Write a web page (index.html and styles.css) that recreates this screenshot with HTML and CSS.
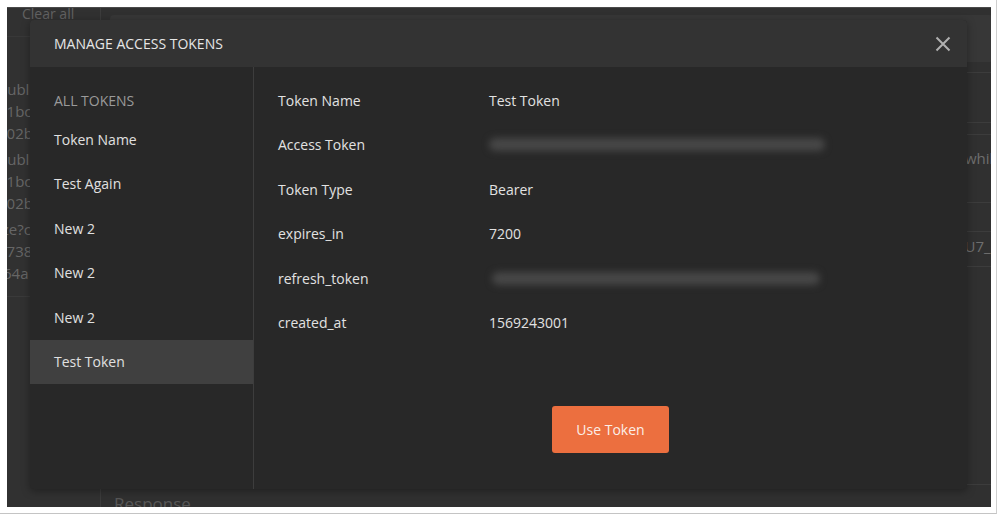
FILE: index.html
```html
<!DOCTYPE html>
<html>
<head>
<meta charset="utf-8">
<link rel="stylesheet" href="styles.css">
</head>
<body>
<div class="frame">
  <div class="screen">
    <aside class="history">
      <div class="history-head">Clear all</div>
      <div class="history-list">
        <div class="history-item"><span>publi</span><span>81bc</span><span>502b</span></div>
        <div class="history-item"><span>publi</span><span>81bc</span><span>502b</span></div>
        <div class="history-item"><span>ize?c</span><span>3738</span><span>f64a</span></div>
      </div>
    </aside>
    <main class="main">
      <div class="url-box"></div>
      <div class="bg-row r1"></div>
      <div class="bg-row r2"></div>
      <div class="bg-row r3"></div>
      <div class="bg-row r4"><span class="bg-text">whil</span></div>
      <div class="bg-row r5"></div>
      <div class="bg-row r6"><span class="bg-text">0U7_</span></div>
      <div class="bg-spacer"></div>
      <div class="bg-response">Response</div>
    </main>

    <div class="modal">
      <header class="modal-head">
        <h1 class="modal-title">MANAGE ACCESS TOKENS</h1>
        <button class="close" aria-label="Close">
          <svg width="16" height="16" viewBox="0 0 16 16"><path d="M1.5 1.5 L14.5 14.5 M14.5 1.5 L1.5 14.5" stroke="#b0b0b0" stroke-width="2" fill="none"/></svg>
        </button>
      </header>
      <div class="modal-body">
        <nav class="tokens">
          <div class="tokens-head">ALL TOKENS</div>
          <div class="token-item">Token Name</div>
          <div class="token-item">Test Again</div>
          <div class="token-item">New 2</div>
          <div class="token-item">New 2</div>
          <div class="token-item">New 2</div>
          <div class="token-item active">Test Token</div>
        </nav>
        <section class="details">
          <div class="detail-grid">
            <div class="label">Token Name</div><div class="value">Test Token</div>
            <div class="label">Access Token</div><div class="value"><div class="blur b1"></div></div>
            <div class="label">Token Type</div><div class="value">Bearer</div>
            <div class="label">expires_in</div><div class="value">7200</div>
            <div class="label">refresh_token</div><div class="value"><div class="blur b2"></div></div>
            <div class="label">created_at</div><div class="value">1569243001</div>
          </div>
          <div class="actions">
            <button class="use-btn">Use Token</button>
          </div>
        </section>
      </div>
    </div>
  </div>
</div>
</body>
</html>
```

FILE: styles.css
```css
html, body {
  margin: 0;
  padding: 0;
  background: #ffffff;
}
body {
  font-family: "Open Sans", "Liberation Sans", sans-serif;
  font-size: 14px;
}
.frame {
  box-sizing: border-box;
  width: 997px;
  height: 514px;
  padding: 7px 5px 6px 7px;
  border-right: 1px solid #cfcfcf;
  border-bottom: 1px solid #c4c4c4;
  background: #fff;
}
.screen {
  position: relative;
  width: 984px;
  height: 500px;
  overflow: hidden;
  display: flex;
  background: #303030;
  border-top: 1px solid #4a4a4a;
  box-sizing: border-box;
}
.history {
  width: 93px;
  flex: none;
  background: #313131;
  border-right: 1px solid #3c3c3c;
  overflow: hidden;
  color: #666666;
}
.history-head {
  height: 28px;
  line-height: 12px;
  padding-left: 15px;
  border-bottom: 1px solid #383838;
  font-size: 14px;
  color: #626262;
}
.history-list {
  padding-top: 39px;
  border-bottom: 1px solid #3a3a3a;
  padding-bottom: 10px;
}
.history-item {
  display: flex;
  flex-direction: column;
  padding: 2px 0;
  height: 66px;
  margin-left: -9px;
}
.history-item span {
  line-height: 22px;
  white-space: nowrap;
  font-size: 15px;
}
.main {
  flex: 1;
  display: flex;
  flex-direction: column;
  padding: 7px 4px 0 3px;
  background: #303030;
}
.url-box {
  height: 47px;
  flex: none;
  border-radius: 4px;
  background: #373737;
  margin-left: 6px;
}
.bg-row {
  flex: none;
  border-bottom: 1px solid #3c3c3c;
  color: #6e6e6e;
  display: flex;
  align-items: center;
}
.r1 { height: 10px; }
.r2 { height: 49px; }
.r3 { height: 11px; }
.r4 { height: 67px; align-items: flex-start; }
.r4 .bg-text { padding-top: 12px; padding-left: 861px; }
.r5 { height: 28px; }
.r6 { height: 34px; align-items: flex-start; }
.r6 .bg-text { padding-top: 3px; padding-left: 852px; }
.bg-text {
  white-space: nowrap;
  font-size: 15px;
  line-height: 22px;
}
.bg-spacer {
  flex: 1;
  border-bottom: 1px solid #3c3c3c;
  margin-bottom: 8px;
}
.bg-response {
  flex: none;
  padding-left: 10px;
  color: #575757;
  font-size: 17px;
  line-height: 22px;
  height: 14px;
}

/* modal */
.modal {
  position: absolute;
  left: 23px;
  top: 12px;
  width: 937px;
  height: 469px;
  background: #282828;
  border-radius: 4px;
  box-shadow: 0 2px 8px rgba(0, 0, 0, 0.35);
  display: flex;
  flex-direction: column;
  overflow: hidden;
}
.modal-head {
  height: 47px;
  flex: none;
  background: #333333;
  display: flex;
  align-items: center;
  justify-content: space-between;
  padding: 0 16px 0 24px;
}
.modal-title {
  margin: 0;
  font-size: 14px;
  font-weight: 400;
  color: #e6e6e6;
}
.close {
  background: none;
  border: 0;
  padding: 0;
  width: 16px;
  height: 16px;
  display: flex;
}
.modal-body {
  flex: 1;
  display: flex;
}
.tokens {
  width: 223px;
  flex: none;
  border-right: 1px solid #3d3d3d;
  padding-top: 20px;
}
.tokens-head {
  height: 30px;
  line-height: 28px;
  padding-left: 24px;
  color: #9a9a9a;
  font-size: 14px;
}
.token-item {
  height: 44.5px;
  display: flex;
  align-items: center;
  padding-left: 24px;
  color: #e0e0e0;
}
.token-item.active {
  background: #404040;
}
.details {
  flex: 1;
  padding: 11px 24px 0 24px;
  display: flex;
  flex-direction: column;
}
.detail-grid {
  display: grid;
  grid-template-columns: 211px 1fr;
  grid-auto-rows: 44.5px;
  align-items: center;
  color: #e2e2e2;
}
.blur {
  height: 13px;
  background: #474747;
  border-radius: 7px;
  filter: blur(3.5px);
}
.b1 { width: 336px; }
.b2 { width: 328px; margin-left: 3px; }
.actions {
  display: flex;
  justify-content: center;
  margin-top: 61px;
}
.use-btn {
  width: 117px;
  height: 47px;
  border: 0;
  border-radius: 3px;
  background: #ec6f3f;
  color: #fbeee8;
  font-family: "Open Sans", "Liberation Sans", sans-serif;
  font-size: 14px;
  cursor: pointer;
}
```
